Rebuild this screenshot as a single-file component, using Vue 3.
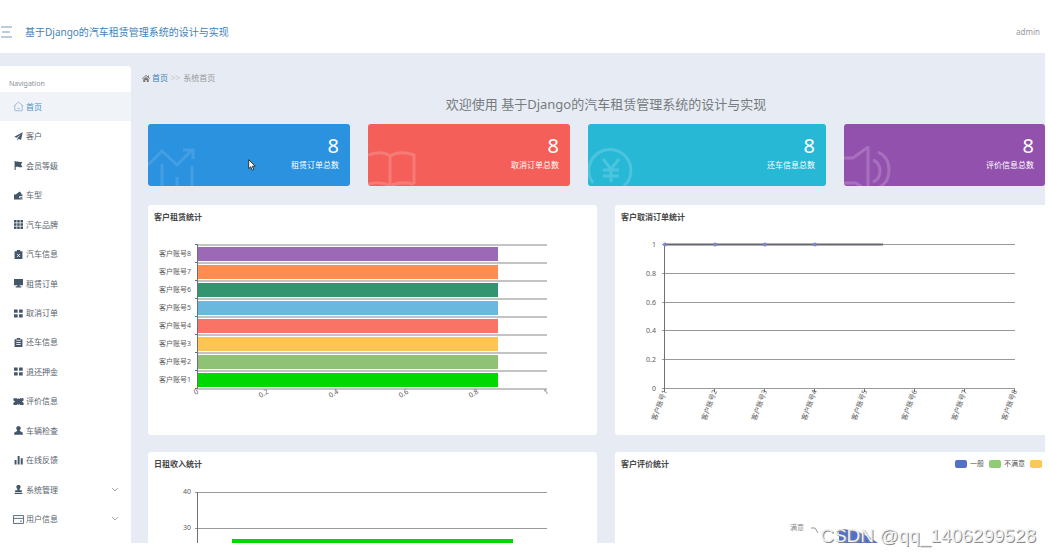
<script setup>
const menu = [
  { label: '首页', icon: 'home', active: true },
  { label: '客户', icon: 'plane' },
  { label: '会员等级', icon: 'flag' },
  { label: '车型', icon: 'wallet' },
  { label: '汽车品牌', icon: 'grid9' },
  { label: '汽车信息', icon: 'clipx' },
  { label: '租赁订单', icon: 'monitor' },
  { label: '取消订单', icon: 'grid4' },
  { label: '还车信息', icon: 'clip' },
  { label: '退还押金', icon: 'grid4' },
  { label: '评价信息', icon: 'ticket' },
  { label: '车辆检查', icon: 'user' },
  { label: '在线反馈', icon: 'bars' },
  { label: '系统管理', icon: 'stamp', more: true },
  { label: '用户信息', icon: 'card', more: true },
]

const solid = {
  plane: 'M15.5 .5 12.5 14 8.500 12.200 6.200 15.500V11L12.500 4 4.500 10.300.5 8.500Z',
  flag: 'M1 0h2v16H1zM3 1.500c4-1.500 6 1.500 12 0L12.500 6l2.500 4.500c-6 1.500-8-1.500-12 0z',
  wallet: 'M0 6h3l7-5 3 3v2h2v3h-4a2 2 0 0 0 0 4h4v2H0zM11 10h4v2h-4z',
  grid9: 'M0 0h4.500v4.500H0zM5.700 0h4.500v4.500H5.700zM11.500 0H16v4.500h-4.500zM0 5.700h4.500v4.500H0zM5.700 5.700h4.500v4.500H5.700zM11.500 5.700H16v4.500h-4.500zM0 11.500h4.500V16H0zM5.700 11.500h4.500V16H5.700zM11.500 11.500H16V16h-4.500z',
  grid4: 'M0 1h6.500v5.500H0zM9 1h6.500v5.500H9zM0 9.500h6.500V15H0zM9 9.500h6.500V15H9z',
  monitor: 'M0 0h16v11H0zM6 11h4v2h3v2H3v-2h3z',
  user: 'M8 0a4 4 0 0 1 2.500 7.200V9l4.500 2 1 4.500H0L1 11l4.500-2V7.200A4 4 0 0 1 8 0z',
  bars: 'M1 7h3.500v8H1zM6.500 0H10v15H6.500zM12 4h3.500v11H12z',
  stamp: 'M8 0c5 0 4.500 5 2 7v2.500h4V13H2V9.500h4V7C3.500 5 3 0 8 0zM1 14h14v2H1z',
  ticket: 'M-1 2h6l1.500 1.500L8 2l1.500 1.500L11 2h6v4l-3 2 3 2v4h-6l-1.500-1.500L8 14l-1.500-1.500L5 14h-6v-4l3-2-3-2z',
}

const stats = [
  { value: 8, label: '租赁订单总数', tone: 'blue' },
  { value: 8, label: '取消订单总数', tone: 'red' },
  { value: 8, label: '还车信息总数', tone: 'cyan' },
  { value: 8, label: '评价信息总数', tone: 'purple' },
]

const rentals = ['#9b69b5', '#ff8c50', '#339570', '#6bb8df', '#f97466', '#ffc553', '#8fc274', '#00d900']
const rentalTicks = ['0', '0.2', '0.4', '0.6', '0.8', '1']
const cancelTicks = ['1', '0.8', '0.6', '0.4', '0.2', '0']
const incomeTicks = [40, 30]
const ratings = [
  { label: '一般', color: '#5470c6' },
  { label: '不满意', color: '#91cc75' },
  { label: '满意', color: '#fac858' },
]
const rowY = (i) => Math.round(16 + i * 28.8) + 0.5
</script>

<template>
  <div class="page">
    <div class="screen">
      <header class="topbar">
        <button class="burger" type="button" aria-label="菜单">
          <svg viewBox="0 0 12 12" width="12" height="12"><path d="M1 1h11M2 6h8M1 11h11" /></svg>
        </button>
        <h1>基于Django的汽车租赁管理系统的设计与实现</h1>
        <a class="account" href="#">admin</a>
      </header>

      <div class="body">
        <aside class="sidebar">
          <p class="nav-title">Navigation</p>
          <ul>
            <li v-for="m in menu" :key="m.label">
              <a href="#" :class="{ active: m.active }">
                <svg class="icon" viewBox="0 0 16 16">
                  <path v-if="solid[m.icon]" :d="solid[m.icon]" fill="currentColor" fill-rule="evenodd" />
                  <g v-else-if="m.icon === 'home'" class="line">
                    <path d="M-.5 7.500 8 0l8.500 7.500M1.500 6v9.500h13V6M6 11.500h4" />
                  </g>
                  <g v-else-if="m.icon === 'card'" class="line">
                    <path d="M-1 1h18v14H-1zM-1 6h18M10.500 11H14" />
                  </g>
                  <g v-else>
                    <path d="M1 2h4V0h6v2h4v14H1z" fill="currentColor" />
                    <path v-if="m.icon === 'clipx'" class="cut" d="m5.500 7 5 5.500M10.500 7l-5 5.500" />
                    <path v-else class="cut" d="M4 4h8M4 8h8M4 11.500h8" />
                  </g>
                </svg>
                <span>{{ m.label }}</span>
                <svg v-if="m.more" class="chevron" viewBox="0 0 8 6"><path d="m1 1 3 3 3-3" /></svg>
              </a>
            </li>
          </ul>
        </aside>

        <main>
          <nav class="crumbs">
            <svg viewBox="0 0 16 14" width="8" height="7"><path d="M8 0 0 7l1 1 7-6 7 6 1-1-2-2V1h-2v2zM2.500 8.500V14h4v-4h3v4h4V8.500L8 4z" /></svg>
            <a href="#">首页</a>
            <span class="sep">&gt;&gt;</span>
            <span>系统首页</span>
          </nav>
          <h2 class="welcome">欢迎使用 基于Django的汽车租赁管理系统的设计与实现</h2>

          <section class="stats">
            <article v-for="s in stats" :key="s.label" class="stat" :class="s.tone">
              <svg class="art" viewBox="0 22 50 40">
                <path v-if="s.tone === 'blue'" d="M0 41 14 27l15 14 14-14M35 26h10v9M14 40v22M29 53v9M44 42v20" />
                <path v-else-if="s.tone === 'red'" d="M0 31Q14 26 22 32V62M22 32Q32 26 46 31V60M0 60Q14 57 22 62Q32 57 46 60" />
                <path v-else-if="s.tone === 'cyan'" d="M5 59A21 21 0 1 1 36 62M15 35l8 10 8-10M15 46h16M15 52h16M23 45v13" />
                <path v-else d="M0 34h9L24 23V62M0 59h12l6 4M29 36Q36 39 36 47T29 58M34 28Q45 33 45 46T34 64" />
              </svg>
              <strong>{{ s.value }}</strong>
              <span>{{ s.label }}</span>
            </article>
          </section>

          <section class="panels">
            <article class="panel">
              <header><h3>客户租赁统计</h3></header>
              <svg class="chart" viewBox="0 0 449 206">
                <path v-for="i in 9" :key="i" class="grid soft" :d="`M49 ${(i - 1) * 18 + 16}H399`" />
                <rect v-for="(c, i) in rentals" :key="c" x="50" :y="18 + i * 18" width="300" height="14" :fill="c" />
                <path class="axis" d="M49.500 16V160" />
                <path v-for="i in 9" :key="'t' + i" class="axis" :d="`M47 ${(i - 1) * 18 + 15.5}h3`" />
                <text v-for="(c, i) in rentals" :key="'l' + i" x="43" :y="27 + i * 18" text-anchor="end">客户账号{{ 8 - i }}</text>
                <text v-for="(t, i) in rentalTicks" :key="'x' + i" text-anchor="end" :transform="`translate(${51 + i * 70} 164) rotate(-30)`">{{ t }}</text>
              </svg>
            </article>

            <article class="panel">
              <header><h3>客户取消订单统计</h3></header>
              <svg class="chart" viewBox="0 0 449 206">
                <g v-for="(t, i) in cancelTicks" :key="t">
                  <path class="grid" :d="`M47 ${rowY(i) - 1}H400`" />
                  <text x="41" :y="rowY(i) + 1" text-anchor="end">{{ t }}</text>
                </g>
                <path class="axis" d="M49.500 16V160" />
                <path class="series" d="M50 15.500H268" />
                <circle v-for="i in 4" :key="i" :cx="i * 50" cy="15.500" r="2" fill="#8088cc" />
                <g v-for="i in 8" :key="'x' + i">
                  <path class="axis" :d="`M${i * 50 - 0.5} 160v3`" />
                  <text text-anchor="end" :transform="`translate(${i * 50 + 2} 162) rotate(-70)`">客户账号{{ i }}</text>
                </g>
              </svg>
            </article>

            <article class="panel">
              <header><h3>日租收入统计</h3></header>
              <svg class="chart" viewBox="0 0 449 206">
                <g v-for="(t, i) in incomeTicks" :key="t">
                  <path class="grid" :d="`M47 ${16.5 + i * 36}H399`" />
                  <text x="43" :y="18 + i * 36" text-anchor="end">{{ t }}</text>
                </g>
                <path class="axis" d="M49.500 16V160" />
                <rect x="84" y="63" width="281" height="97" fill="#00d900" />
              </svg>
            </article>

            <article class="panel">
              <header>
                <h3>客户评价统计</h3>
                <ul class="legend">
                  <li v-for="r in ratings" :key="r.label">
                    <svg viewBox="0 0 12 8" width="12" height="8"><rect width="12" height="8" rx="2" :fill="r.color" /></svg>
                    <span>{{ r.label }}</span>
                  </li>
                </ul>
              </header>
              <svg class="chart" viewBox="0 0 449 206">
                <path d="M224 114V53A61 61 0 0 1 285 114Z" fill="#5470c6" />
                <path class="grid" d="M196 52h4l3 5" />
                <text class="pale" x="189" y="54" text-anchor="end">满意</text>
              </svg>
            </article>
          </section>
        </main>
      </div>
    </div>

    <svg class="pointer" viewBox="0 0 8 12"><path d="M.7.7v9l2-2 1.500 3.500 1.600-.7-1.500-3.300h3z" /></svg>
    <span class="watermark">CSDN @qq_1406299528</span>
  </div>
</template>

<style>
body {
  margin: 0;
  background: #fff;
}
</style>

<style scoped>
.page {
  position: relative;
  box-sizing: border-box;
  height: 100vh;
  padding: 0 4px 12px 0;
  overflow: hidden;
  font-family: "Noto Sans", "Noto Sans CJK SC", sans-serif;
  font-size: 8px;
  line-height: 12px;
  color: #59636e;
}
.screen {
  display: flex;
  flex-direction: column;
  height: 100%;
  overflow: hidden;
  background: #e7ebf3;
}
h1, h2, h3, p, ul {
  margin: 0;
  padding: 0;
  font-weight: 400;
}
ul {
  list-style: none;
}
a {
  color: inherit;
  text-decoration: none;
}
.topbar {
  display: flex;
  flex: none;
  align-items: center;
  height: 53px;
  padding: 11px 5px 0 0;
  box-sizing: border-box;
  background: #fff;
}
.burger {
  display: flex;
  padding: 0;
  border: 0;
  background: none;
}
.burger path {
  fill: none;
  stroke: #a9bccb;
  stroke-width: 1.500;
}
.topbar h1 {
  margin-left: 13px;
  font-size: 10px;
  line-height: 16px;
  color: #3f83b8;
}
.account {
  margin-left: auto;
  color: #999;
}
.body {
  display: flex;
  flex: 1;
  min-height: 0;
  padding-top: 13px;
}
.sidebar {
  display: flex;
  flex: none;
  flex-direction: column;
  box-sizing: border-box;
  width: 131px;
  padding-bottom: 9px;
  border-radius: 0 4px 0 0;
  background: #fff;
}
.nav-title {
  padding: 12px 0 2px 9px;
  font-size: 7px;
  color: #8b8f94;
}
.sidebar ul {
  display: flex;
  flex: 1;
  flex-direction: column;
}
.sidebar li {
  display: flex;
  flex: 1;
}
.sidebar a {
  display: flex;
  flex: 1;
  align-items: center;
  gap: 3px;
  padding: 0 12px 0 14px;
}
.sidebar a.active {
  background: #f0f4f9;
  color: #4c8fc4;
}
.icon {
  flex: none;
  width: 9px;
  height: 9px;
  overflow: visible;
  color: #44576a;
}
.active .icon {
  color: #8fb3d3;
}
.line {
  fill: none;
  stroke: currentColor;
  stroke-width: 1.500;
}
.cut {
  fill: none;
  stroke: #fff;
  stroke-width: 1.500;
}
.chevron {
  width: 8px;
  height: 6px;
  margin-left: auto;
}
.chevron path {
  fill: none;
  stroke: #a3a8ae;
}
main {
  flex: 1;
  min-width: 0;
  padding-left: 17px;
  overflow: hidden;
}
.crumbs {
  display: flex;
  align-items: center;
  gap: 2px;
  margin: 6px 0 0 -6px;
  color: #999;
}
.crumbs svg {
  fill: #777;
}
.crumbs a {
  color: #3c7fb5;
}
.sep {
  padding: 0 1px;
  color: #c3c7ce;
}
.welcome {
  width: calc(100% + 19px);
  margin-top: 10px;
  font-size: 13px;
  line-height: 20px;
  text-align: center;
  color: #767b80;
}
.stats {
  display: grid;
  grid-template-columns: 202fr 202fr 238fr 201fr;
  gap: 18px;
  margin-top: 10px;
}
.stat {
  position: relative;
  display: flex;
  flex-direction: column;
  align-items: flex-end;
  box-sizing: border-box;
  height: 62px;
  padding: 10px 11px 0 0;
  border-radius: 3px;
  overflow: hidden;
  color: #fff;
}
.stat strong {
  font-size: 20px;
  font-weight: 400;
  line-height: 24px;
}
.blue { background: #2a92df; }
.red { background: #f55f59; }
.cyan { background: #27b8d6; }
.purple { background: #9351ae; }
.stat span {
  font-size: 8px;
  line-height: 14px;
}
.art {
  position: absolute;
  bottom: 0;
  left: 0;
  width: 50px;
  height: 40px;
}
.art path {
  fill: none;
  stroke: rgba(255, 255, 255, 0.18);
  stroke-width: 3;
}
.blue .art path {
  stroke: rgba(255, 255, 255, 0.12);
}
.panels {
  display: grid;
  grid-template-columns: 1fr 1fr;
  gap: 17px 18px;
  width: calc(100% + 19px);
  margin-top: 19px;
}
.panel {
  border-radius: 3px;
  background: #fff;
}
.panel header {
  display: flex;
  align-items: center;
  justify-content: space-between;
  height: 24px;
  padding: 0 5px 0 6px;
}
.panel h3 {
  font-size: 8px;
  font-weight: 700;
  color: #464646;
}
.legend {
  display: flex;
  gap: 5px;
  font-size: 7px;
  color: #555;
}
.legend li {
  display: flex;
  align-items: center;
  gap: 3px;
}
.chart {
  display: block;
  width: 100%;
  height: auto;
}
.chart text {
  font-size: 7px;
  fill: #5c5c5c;
}
.chart .pale {
  fill: #888;
}
.grid,
.axis,
.series {
  fill: none;
  stroke: #999;
  stroke-width: 1;
}
.soft {
  stroke: #c4c4c4;
  stroke-width: 2;
}
.axis {
  stroke: #6e7079;
}
.series {
  stroke: #66666e;
  stroke-width: 2;
}
.pointer {
  position: absolute;
  top: 159px;
  left: 248px;
  width: 8px;
  height: 12px;
}
.pointer path {
  fill: #fff;
  stroke: #333;
}
.watermark {
  position: absolute;
  right: 13px;
  bottom: 8px;
  font-family: "Liberation Sans", sans-serif;
  font-size: 19px;
  line-height: 22px;
  color: #f0f0f0;
  text-shadow: 1px 1px 0 #888;
}
</style>
